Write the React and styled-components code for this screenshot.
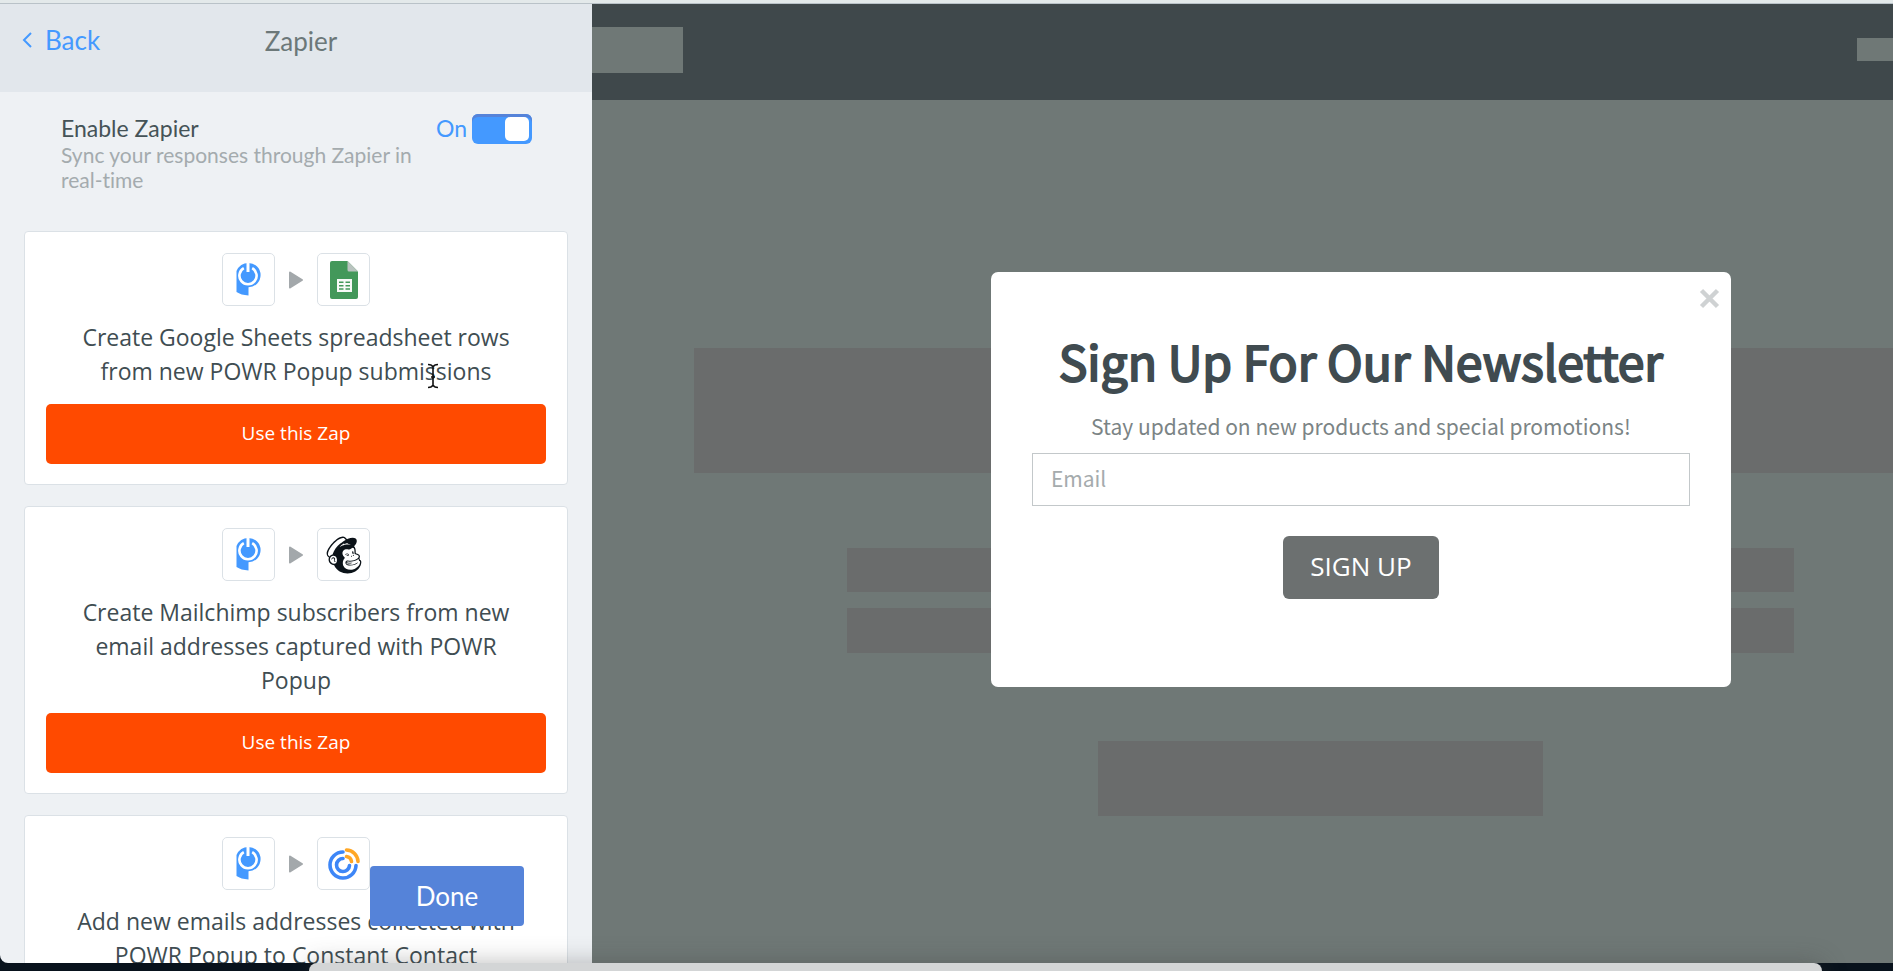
import React, { useState } from 'react';
import styled, { createGlobalStyle } from 'styled-components';
import { FaMailchimp } from 'react-icons/fa';

const GlobalStyle = createGlobalStyle`
  * { box-sizing: border-box; }
  html, body, #root { height: 100%; }
  body {
    margin: 0;
    overflow: hidden;
    background: #08121c;
  }
  h1, h2, p { margin: 0; }
  button, input { font: inherit; }
`

const Desktop = styled.div`
  height: 100vh;
  display: flex;
  flex-direction: column;
  border-top: 3px solid #e3e9ea;
`

const Editor = styled.div`
  flex: 1;
  min-height: 0;
  display: flex;
  border-top: 1px solid #b9c2c8;
  border-bottom-left-radius: 8px;
  overflow: hidden;
`

const Sidebar = styled.aside`
  position: relative;
  flex: 0 0 592px;
  display: flex;
  flex-direction: column;
  overflow: hidden;
  background: #eef1f4;
  font-family: Lato, 'Open Sans', sans-serif;
  font-variant-ligatures: none;
`

const SideHeader = styled.header`
  flex: none;
  display: grid;
  grid-template-columns: 1fr auto 1fr;
  align-items: center;
  height: 88px;
  padding: 0 12px 14px 22px;
  background: #e2e7ec;
`

const BackLink = styled.a`
  display: flex;
  align-items: center;
  gap: 12px;
  padding-bottom: 2px;
  color: #4499ff;
  font-size: 26px;
  line-height: 32px;
  text-decoration: none;
`

const SideTitle = styled.h1`
  color: #6c7879;
  font-size: 26px;
  font-weight: 400;
  line-height: 32px;
`

const Setting = styled.div`
  flex: none;
  display: flex;
  justify-content: space-between;
  padding: 22px 60px 0 61px;
  height: 139px;
`

const SettingText = styled.div`
  width: 360px;
`

const SettingLabel = styled.label`
  display: block;
  color: #455357;
  font-size: 23px;
  line-height: 28px;
`

const Hint = styled.p`
  color: #a4abae;
  font-size: 21px;
  line-height: 25px;
`

const ToggleWrap = styled.div`
  display: flex;
  align-items: center;
  gap: 5px;
  height: 30px;
  color: #4499ff;
  font-size: 23px;
  line-height: 28px;

  span { padding-bottom: 2px; }
`

const Toggle = styled.input`
  appearance: none;
  display: flex;
  justify-content: flex-start;
  width: 60px;
  height: 30px;
  margin: 0;
  padding: 3px;
  border-radius: 6px;
  background: #b7bec2;
  box-shadow: inset 0 3px 0 #9aa2a6;
  cursor: pointer;

  &:checked {
    justify-content: flex-end;
    background: #4499ff;
    box-shadow: inset 0 3px 0 #5583d9;
  }

  &::before {
    content: '';
    width: 24px;
    height: 24px;
    border-radius: 5px;
    background: #fff;
  }
`

const ZapList = styled.div`
  display: flex;
  flex-direction: column;
  gap: 21px;
  padding: 0 24px;
`

const Card = styled.section`
  display: flex;
  flex-direction: column;
  gap: 14px;
  padding: 21px 21px 20px;
  border: 1px solid #dbe1e6;
  border-radius: 4px;
  background: #fff;
`

const Flow = styled.div`
  display: flex;
  justify-content: center;
  align-items: center;
  gap: 13px;
`

const AppTile = styled.div`
  display: flex;
  justify-content: center;
  align-items: center;
  width: 53px;
  height: 53px;
  border: 1px solid #dbe1e6;
  border-radius: 5px;
  background: #fff;
  color: #0b1218;
`

const ZapText = styled.p`
  padding: 0 24px 2px;
  color: #404d52;
  font-family: 'Open Sans', sans-serif;
  font-size: 23px;
  line-height: 34px;
  text-align: center;
`

const ZapButton = styled.button`
  height: 60px;
  padding: 0 0 2px;
  border: 0;
  border-radius: 5px;
  background: #ff4a00;
  color: #fff;
  font-family: 'Open Sans', sans-serif;
  font-size: 19px;
  cursor: pointer;
`

const DoneButton = styled.button`
  position: absolute;
  right: 68px;
  bottom: 37px;
  width: 154px;
  height: 60px;
  border: 0;
  border-radius: 4px;
  background: #5583d9;
  color: #fff;
  font-size: 26px;
  cursor: pointer;
`

const Cursor = styled.svg`
  position: absolute;
  left: 427px;
  top: 359px;
`

const Preview = styled.main`
  position: relative;
  flex: 1;
  min-width: 0;
  overflow: hidden;
  background: #6f7876;
`

const Site = styled.div`
  width: 112%;
  display: flex;
  flex-direction: column;
  align-items: center;
`

const SiteHeader = styled.div`
  align-self: stretch;
  display: flex;
  justify-content: space-between;
  align-items: center;
  height: 96px;
  margin-bottom: 248px;
  padding: 0 82px 5px 0;
  background: #3f484b;
`

const Block = styled.div`
  width: ${props => props.$w};
  height: ${props => props.$h}px;
  margin-bottom: ${props => props.$gap || 0}px;
  background: ${props => props.$light ? '#6f7876' : '#6a6c6c'};
`

const Overlay = styled.div`
  position: absolute;
  top: 0;
  left: 0;
  width: 118.2%;
  display: flex;
  justify-content: center;
  padding-top: 268px;
`

const Modal = styled.div`
  position: relative;
  width: 740px;
  padding: 56px 41px 88px;
  border-radius: 7px;
  background: #fff;
  text-align: center;
  font-family: 'Noto Sans CJK SC', sans-serif;
`

const CloseButton = styled.button`
  position: absolute;
  top: 16px;
  right: 11px;
  display: flex;
  padding: 0;
  border: 0;
  background: none;
  cursor: pointer;
`

const Headline = styled.h2`
  color: #404b50;
  font-size: 48px;
  font-weight: 400;
  line-height: 64px;
  white-space: nowrap;
  -webkit-text-stroke: 2px #404b50;
`

const Sub = styled.p`
  margin-top: 18px;
  color: #7b8485;
  font-size: 21px;
  line-height: 32px;
`

const EmailInput = styled.input`
  display: block;
  width: 100%;
  height: 53px;
  margin: 11px 0 30px;
  padding: 0 18px 3px;
  border: 1px solid #c3c8ca;
  background: #fff;
  font-size: 21px;

  &::placeholder {
    color: #a5abad;
    opacity: 1;
  }
`

const SignUp = styled.button`
  display: block;
  width: 156px;
  height: 63px;
  margin: 0 auto;
  padding: 0 0 3px;
  border: 0;
  border-radius: 6px;
  background: #6c7070;
  color: #fff;
  font-family: 'Open Sans', sans-serif;
  font-size: 26px;
  cursor: pointer;
`

const DockBar = styled.div`
  position: relative;
  flex: none;
  height: 8px;
  padding: 0 71px 0 309px;
`

const Dock = styled.div`
  height: 30px;
  border-radius: 8px;
  background: #d3d5d6;
  box-shadow: 0 0 24px rgba(60, 60, 60, 0.35);
`

const PowrIcon = () => (
  <svg width="25" height="33" viewBox="0 0 25 33">
    <path d="M0.500 8Q4 0 12.500 0A12 12 0 0 1 12.500 24.200V32.500Q5 32 0.500 29Z" fill="#4499ff" />
    <path d="M7.800 5.200A8.600 8.600 0 1 0 16.200 5.200" fill="none" stroke="#fff" strokeWidth="2.600" />
    <path d="M12 0V9" stroke="#fff" strokeWidth="3" />
  </svg>
)

const SheetsIcon = () => (
  <svg width="28" height="38" viewBox="0 0 28 38">
    <path d="M2 0H17.500L28 10.500V36Q28 38 26 38H2Q0 38 0 36V2Q0 0 2 0Z" fill="#43985a" />
    <path d="M17.500 0L28 10.500H19Q17.500 10.500 17.500 9Z" fill="#b9c3bf" />
    <rect x="7" y="18" width="15" height="13" fill="#f7faf8" />
    <path d="M9 21.300H13.500M15.500 21.300H20M9 24.700H13.500M15.500 24.700H20M9 28.100H13.500M15.500 28.100H20" stroke="#43985a" strokeWidth="1.500" />
  </svg>
)

const ContactIcon = () => (
  <svg width="32" height="32" viewBox="0 0 32 32" fill="none" strokeWidth="3.600" strokeLinecap="round">
    <path d="M15 4A13 13 0 1 0 28 17.500" stroke="#3d86f7" />
    <path d="M15 10.500A6.500 6.500 0 1 0 21.500 17.500" stroke="#3d86f7" />
    <path d="M18.500 2A12 12 0 0 1 30 13.500M18.500 8.500A6 6 0 0 1 23.500 13.500" stroke="#ffa726" />
  </svg>
)

const Arrow = () => (
  <svg width="16" height="18" viewBox="0 0 16 18">
    <path d="M2 1.500L14 9L2 16.500Z" fill="#a3a8ab" stroke="#a3a8ab" strokeWidth="2" strokeLinejoin="round" />
  </svg>
)

const zaps = [
  {
    id: 'sheets',
    icon: <SheetsIcon />,
    text: 'Create Google Sheets spreadsheet rows from new POWR Popup submissions',
  },
  {
    id: 'mailchimp',
    icon: <FaMailchimp size={42} />,
    text: 'Create Mailchimp subscribers from new email addresses captured with POWR Popup',
  },
  {
    id: 'contact',
    icon: <ContactIcon />,
    text: 'Add new emails addresses collected with POWR Popup to Constant Contact',
  },
];

const ZapCard = ({ zap }) => (
  <Card>
    <Flow>
      <AppTile><PowrIcon /></AppTile>
      <Arrow />
      <AppTile>{zap.icon}</AppTile>
    </Flow>
    <ZapText>{zap.text}</ZapText>
    <ZapButton>Use this Zap</ZapButton>
  </Card>
)

const Popup = () => {
  const [ email, setEmail ] = useState('');

  return (
    <Modal>
      <CloseButton aria-label="Close">
        <svg width="21" height="21" viewBox="0 0 21 21">
          <path d="M2.500 2.500L18.500 18.500M18.500 2.500L2.500 18.500" stroke="#cfd2d3" strokeWidth="4.500" />
        </svg>
      </CloseButton>
      <Headline>Sign Up For Our Newsletter</Headline>
      <Sub>Stay updated on new products and special promotions!</Sub>
      <EmailInput
        type="email"
        aria-label="Email"
        placeholder="Email"
        value={email}
        onChange={(e) => setEmail(e.target.value)}
      />
      <SignUp>SIGN UP</SignUp>
    </Modal>
  )
}

const App = () => {
  const [ enabled, setEnabled ] = useState(true);

  return (
    <>
      <GlobalStyle />
      <Desktop>
        <Editor>
          <Sidebar>
            <SideHeader>
              <BackLink href="#">
                <svg width="11" height="16" viewBox="0 0 11 16">
                  <path d="M9 1L2 8L9 15" fill="none" stroke="#4499ff" strokeWidth="2" />
                </svg>
                Back
              </BackLink>
              <SideTitle>Zapier</SideTitle>
            </SideHeader>
            <Setting>
              <SettingText>
                <SettingLabel htmlFor="zapier">Enable Zapier</SettingLabel>
                <Hint>Sync your responses through Zapier in real-time</Hint>
              </SettingText>
              <ToggleWrap>
                <span>{enabled ? 'On' : 'Off'}</span>
                <Toggle
                  id="zapier"
                  type="checkbox"
                  checked={enabled}
                  onChange={(e) => setEnabled(e.target.checked)}
                />
              </ToggleWrap>
            </Setting>
            <ZapList>
              {zaps.map(zap => <ZapCard key={zap.id} zap={zap} />)}
            </ZapList>
            <DoneButton>Done</DoneButton>
            <Cursor width="12" height="26" viewBox="0 0 12 26">
              <path d="M1 1.500Q5 1.500 6 4Q7 1.500 11 1.500M6 4V22M1 24.500Q5 24.500 6 22Q7 24.500 11 24.500M4 14H8" fill="none" stroke="#111" strokeWidth="1.600" />
            </Cursor>
          </Sidebar>
          <Preview>
            <Site>
              <SiteHeader>
                <Block $w="91px" $h={46} $light />
                <Block $w="110px" $h={23} $light />
              </SiteHeader>
              <Block $w="86%" $h={125} $gap={75} />
              <Block $w="65%" $h={44} $gap={16} />
              <Block $w="65%" $h={45} $gap={88} />
              <Block $w="30.5%" $h={75} />
            </Site>
            <Overlay>
              <Popup />
            </Overlay>
          </Preview>
        </Editor>
        <DockBar>
          <Dock />
        </DockBar>
      </Desktop>
    </>
  )
}

export default App;
